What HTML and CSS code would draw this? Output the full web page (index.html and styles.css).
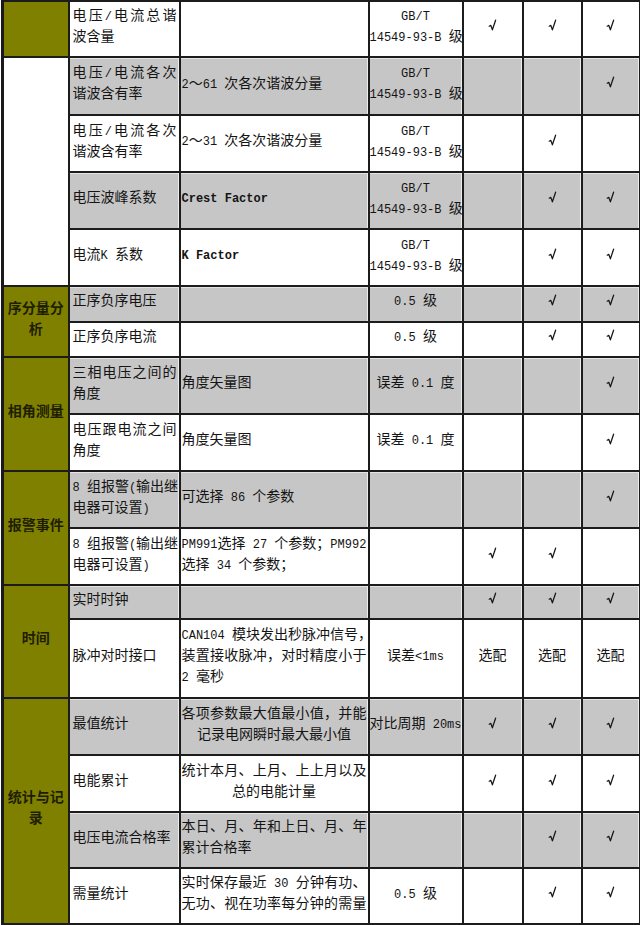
FILE: index.html
```html
<!DOCTYPE html>
<html lang="zh-CN">
<head>
<meta charset="utf-8">
<title>功能对照表</title>
<link rel="stylesheet" href="styles.css">
</head>
<body>
<svg class="defs" width="0" height="0" aria-hidden="true">
  <symbol id="ck" viewBox="0 0 9 12">
    <path d="M1.2 7.2 L2.8 6.4 L4.4 10.8 L7.6 1.2" fill="none" stroke="#151515" stroke-width="1.25" stroke-linejoin="round" stroke-linecap="round"/>
  </symbol>
</svg>
<table class="spec">
  <colgroup>
    <col class="w1"><col class="w2"><col class="w3"><col class="w4"><col class="w5"><col class="w6"><col class="w7">
  </colgroup>
  <tbody>
    <tr class="top1">
      <td class="grp"></td>
      <td class="n"><div class="ln j">电压<span class="m">/</span>电流总谐</div><div class="ln">波含量</div></td>
      <td class="d"></td>
      <td class="s"><div class="ln"><span class="m">GB/T</span></div><div class="ln"><span class="m">14549-93-B </span>级</div></td>
      <td class="k"><svg class="ck"><use href="#ck"/></svg></td><td class="k"><svg class="ck"><use href="#ck"/></svg></td><td class="k"><svg class="ck"><use href="#ck"/></svg></td>
    </tr>
    <tr class="h58 g">
      <td class="blank" rowspan="4"></td>
      <td class="n"><div class="ln j">电压<span class="m">/</span>电流各次</div><div class="ln">谐波含有率</div></td>
      <td class="d"><div class="ln"><span class="m">2</span>～<span class="m">61 </span>次各次谐波分量</div></td>
      <td class="s"><div class="ln"><span class="m">GB/T</span></div><div class="ln"><span class="m">14549-93-B </span>级</div></td>
      <td class="k"></td><td class="k"></td><td class="k"><svg class="ck"><use href="#ck"/></svg></td>
    </tr>
    <tr class="h57">
      <td class="n"><div class="ln j">电压<span class="m">/</span>电流各次</div><div class="ln">谐波含有率</div></td>
      <td class="d"><div class="ln"><span class="m">2</span>～<span class="m">31 </span>次各次谐波分量</div></td>
      <td class="s"><div class="ln"><span class="m">GB/T</span></div><div class="ln"><span class="m">14549-93-B </span>级</div></td>
      <td class="k"></td><td class="k"><svg class="ck"><use href="#ck"/></svg></td><td class="k"></td>
    </tr>
    <tr class="h57 g">
      <td class="n"><div class="ln">电压波峰系数</div></td>
      <td class="d"><div class="ln"><span class="m b">Crest Factor</span></div></td>
      <td class="s"><div class="ln"><span class="m">GB/T</span></div><div class="ln"><span class="m">14549-93-B </span>级</div></td>
      <td class="k"></td><td class="k"><svg class="ck"><use href="#ck"/></svg></td><td class="k"><svg class="ck"><use href="#ck"/></svg></td>
    </tr>
    <tr class="h57">
      <td class="n"><div class="ln">电流<span class="m">K </span>系数</div></td>
      <td class="d"><div class="ln"><span class="m b">K Factor</span></div></td>
      <td class="s"><div class="ln"><span class="m">GB/T</span></div><div class="ln"><span class="m">14549-93-B </span>级</div></td>
      <td class="k"></td><td class="k"><svg class="ck"><use href="#ck"/></svg></td><td class="k"><svg class="ck"><use href="#ck"/></svg></td>
    </tr>

    <tr class="h35 g">
      <td class="grp" rowspan="2">序分量分析</td>
      <td class="n"><div class="ln">正序负序电压</div></td>
      <td class="d"></td>
      <td class="s"><div class="ln"><span class="m">0.5 </span>级</div></td>
      <td class="k"></td><td class="k"><svg class="ck"><use href="#ck"/></svg></td><td class="k"><svg class="ck"><use href="#ck"/></svg></td>
    </tr>
    <tr class="h35">
      <td class="n"><div class="ln">正序负序电流</div></td>
      <td class="d"></td>
      <td class="s"><div class="ln"><span class="m">0.5 </span>级</div></td>
      <td class="k"></td><td class="k"><svg class="ck"><use href="#ck"/></svg></td><td class="k"><svg class="ck"><use href="#ck"/></svg></td>
    </tr>

    <tr class="h57 g">
      <td class="grp" rowspan="2">相角测量</td>
      <td class="n"><div class="ln j">三相电压之间的</div><div class="ln">角度</div></td>
      <td class="d"><div class="ln">角度矢量图</div></td>
      <td class="s"><div class="ln">误差<span class="m"> 0.1 </span>度</div></td>
      <td class="k"></td><td class="k"></td><td class="k"><svg class="ck"><use href="#ck"/></svg></td>
    </tr>
    <tr class="h57">
      <td class="n"><div class="ln j">电压跟电流之间</div><div class="ln">角度</div></td>
      <td class="d"><div class="ln">角度矢量图</div></td>
      <td class="s"><div class="ln">误差<span class="m"> 0.1 </span>度</div></td>
      <td class="k"></td><td class="k"></td><td class="k"><svg class="ck"><use href="#ck"/></svg></td>
    </tr>

    <tr class="h57 g">
      <td class="grp" rowspan="2">报警事件</td>
      <td class="n"><div class="ln j"><span class="m">8 </span>组报警<span class="m">(</span>输出继</div><div class="ln">电器可设置<span class="m">)</span></div></td>
      <td class="d"><div class="ln">可选择<span class="m"> 86 </span>个参数</div></td>
      <td class="s"></td>
      <td class="k"></td><td class="k"></td><td class="k"><svg class="ck"><use href="#ck"/></svg></td>
    </tr>
    <tr class="h57">
      <td class="n"><div class="ln j"><span class="m">8 </span>组报警<span class="m">(</span>输出继</div><div class="ln">电器可设置<span class="m">)</span></div></td>
      <td class="d"><div class="ln"><span class="m"> PM991</span>选择<span class="m"> 27 </span>个参数；<span class="m">PM992</span></div><div class="ln">选择<span class="m"> 34 </span>个参数；</div></td>
      <td class="s"></td>
      <td class="k"><svg class="ck"><use href="#ck"/></svg></td><td class="k"><svg class="ck"><use href="#ck"/></svg></td><td class="k"></td>
    </tr>

    <tr class="h34 g">
      <td class="grp" rowspan="2">时间</td>
      <td class="n"><div class="ln">实时时钟</div></td>
      <td class="d"></td>
      <td class="s"></td>
      <td class="k"><svg class="ck"><use href="#ck"/></svg></td><td class="k"><svg class="ck"><use href="#ck"/></svg></td><td class="k"><svg class="ck"><use href="#ck"/></svg></td>
    </tr>
    <tr class="h79">
      <td class="n"><div class="ln">脉冲对时接口</div></td>
      <td class="d"><div class="ln j"><span class="m">CAN104 </span>模块发出秒脉冲信号，</div><div class="ln j">装置接收脉冲，对时精度小于</div><div class="ln"><span class="m">2 </span>毫秒</div></td>
      <td class="s"><div class="ln">误差<span class="m">&lt;1ms</span></div></td>
      <td class="k t">选配</td><td class="k t">选配</td><td class="k t">选配</td>
    </tr>

    <tr class="h57 g">
      <td class="grp" rowspan="4">统计与记录</td>
      <td class="n"><div class="ln">最值统计</div></td>
      <td class="d"><div class="ln j">各项参数最大值最小值，并能</div><div class="ln c">记录电网瞬时最大最小值</div></td>
      <td class="s"><div class="ln">对比周期<span class="m"> 20ms</span></div></td>
      <td class="k"><svg class="ck"><use href="#ck"/></svg></td><td class="k"><svg class="ck"><use href="#ck"/></svg></td><td class="k"><svg class="ck"><use href="#ck"/></svg></td>
    </tr>
    <tr class="h57">
      <td class="n"><div class="ln">电能累计</div></td>
      <td class="d"><div class="ln j">统计本月、上月、上上月以及</div><div class="ln c">总的电能计量</div></td>
      <td class="s"></td>
      <td class="k"><svg class="ck"><use href="#ck"/></svg></td><td class="k"><svg class="ck"><use href="#ck"/></svg></td><td class="k"><svg class="ck"><use href="#ck"/></svg></td>
    </tr>
    <tr class="h56 g">
      <td class="n"><div class="ln">电压电流合格率</div></td>
      <td class="d"><div class="ln j">本日、月、年和上日、月、年</div><div class="ln">累计合格率</div></td>
      <td class="s"></td>
      <td class="k"></td><td class="k"><svg class="ck"><use href="#ck"/></svg></td><td class="k"><svg class="ck"><use href="#ck"/></svg></td>
    </tr>
    <tr class="h56">
      <td class="n"><div class="ln">需量统计</div></td>
      <td class="d"><div class="ln j">实时保存最近<span class="m"> 30 </span>分钟有功、</div><div class="ln j">无功、视在功率每分钟的需量</div></td>
      <td class="s"><div class="ln"><span class="m">0.5 </span>级</div></td>
      <td class="k"></td><td class="k"><svg class="ck"><use href="#ck"/></svg></td><td class="k"><svg class="ck"><use href="#ck"/></svg></td>
    </tr>
  </tbody>
</table>
</body>
</html>
```
FILE: styles.css
```css
html, body {
  margin: 0;
  padding: 0;
  background: #ffffff;
}

body {
  font-family: "Noto Sans CJK SC", "Noto Sans", sans-serif;
  font-size: 14px;
  color: #141414;
}

.defs {
  position: absolute;
  width: 0;
  height: 0;
  overflow: hidden;
}

.spec {
  border-collapse: collapse;
  table-layout: fixed;
  width: 639px;
  margin: 0 0 0 1px;
  border-left: 3px solid #1a1a1a;
}

.w1 { width: 66px; }
.w2 { width: 111px; }
.w3 { width: 189px; }
.w4 { width: 94px; }
.w5 { width: 60px; }
.w6 { width: 59px; }
.w7 { width: 58px; }

.spec td {
  border: 2px solid #1c1c1c;
  padding: 0 2px 8px 2px;
  vertical-align: middle;
  line-height: 21px;
}

.top1 td { height: 46px; }
.h58 td { height: 48px; }
.h56 td { height: 46px; }
.h57 td { height: 47px; }
.h35 td { height: 25.5px; }
.h34 td { height: 24px; }
.h79 td { height: 69px; }

.spec .g td {
  background: #c6c6c6;
  box-shadow: inset -1px 0 0 #ececec, inset 0 1px 0 #e4e4e4;
}

.spec td.grp {
  background: #808000;
  box-shadow: none;
  text-align: center;
  font-weight: bold;
  color: #1e1e02;
  padding: 0 3px 8px 3px;
  font-size: 14px;
}

.spec td.blank {
  background: #ffffff;
  box-shadow: none;
}

.spec td.n {
  padding-left: 3px;
  padding-right: 2px;
}

.spec td.d {
  padding-left: 1px;
  padding-right: 1px;
}

.spec td.s {
  text-align: center;
  padding-left: 0;
  padding-right: 0;
}

.spec td.k {
  text-align: center;
  padding-left: 0;
  padding-right: 0;
  line-height: 0;
}

.spec td.t {
  font-size: 14px;
  line-height: 21px;
}

.ck {
  width: 9px;
  height: 12px;
  display: inline-block;
  vertical-align: middle;
}

.ln {
  white-space: nowrap;
  height: 21px;
}

.ln.j {
  text-align: justify;
  text-align-last: justify;
}

.ln.c {
  text-align: center;
}

.m {
  font-family: "Liberation Mono", "DejaVu Sans Mono", monospace;
  font-size: 12px;
  line-height: 12px;
}

.m.b {
  font-weight: bold;
}
```
